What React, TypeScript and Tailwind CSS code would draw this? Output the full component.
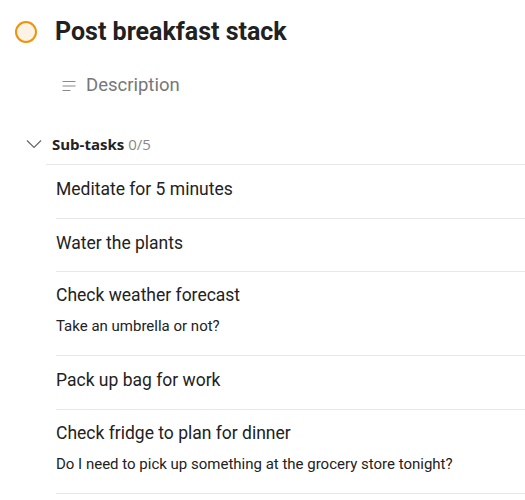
import React from "react";

const items = [
  { title: "Meditate for 5 minutes" },
  { title: "Water the plants" },
  { title: "Check weather forecast", desc: "Take an umbrella or not?" },
  { title: "Pack up bag for work" },
  { title: "Check fridge to plan for dinner", desc: "Do I need to pick up something at the grocery store tonight?" },
];

export default function App() {
  return (
    <div className="w-[525px] h-[500px] overflow-hidden bg-white text-[#222]" style={{ fontFamily: "Roboto, 'Open Sans', sans-serif" }}>
      <div className="flex items-center pt-[8px] pl-[15px] h-[48px] box-content">
        <div className="w-[22px] h-[22px] rounded-full border-2 border-[#ef9408] bg-[#fdf2e6] shrink-0" />
        <h1 className="ml-[18px] text-[25px] font-bold leading-[32px] text-[#212121]">Post breakfast stack</h1>
      </div>
      <div className="flex items-center mt-[17px] pl-[62px] h-[26px]">
        <svg width="14" height="12" viewBox="0 0 14 12" className="shrink-0">
          <path d="M0.5 1.5H13.5M0.5 6H13.5M0.5 10.5H8.5" stroke="#8a8a8a" strokeWidth="1.2" fill="none" />
        </svg>
        <span className="ml-[10px] text-[18.5px] text-[#777]">Description</span>
      </div>
      <div className="flex items-center mt-[34px] pl-[26px] h-[22px]">
        <svg width="16" height="10" viewBox="0 0 16 10" className="shrink-0">
          <path d="M1 1.5L8 8.5L15 1.5" stroke="#666" strokeWidth="1.2" fill="none" />
        </svg>
        <span className="ml-[10px] text-[15px] font-bold text-[#222]" style={{ fontFamily: "'Open Sans', sans-serif" }}>
          Sub-tasks <span className="font-normal text-[#888]">0/5</span>
        </span>
      </div>
      <div className="mt-[9px] ml-[46px] border-t border-[#e8e8e8]" />
      <div className="pl-[56px]">
        {items.map((it, i) =>
          it.desc ? (
            <div key={i} className="border-b border-[#e8e8e8] pt-[11px] pb-[19px]">
              <div className="text-[17.5px] leading-[24px] text-[#222]">{it.title}</div>
              <div className="mt-[9px] text-[15px] leading-[20px] text-[#222]">{it.desc}</div>
            </div>
          ) : (
            <div key={i} className="border-b border-[#e8e8e8] pt-[12px] pb-[16.5px]">
              <div className="text-[17.5px] leading-[24px] text-[#222]">{it.title}</div>
            </div>
          )
        )}
      </div>
    </div>
  );
}
